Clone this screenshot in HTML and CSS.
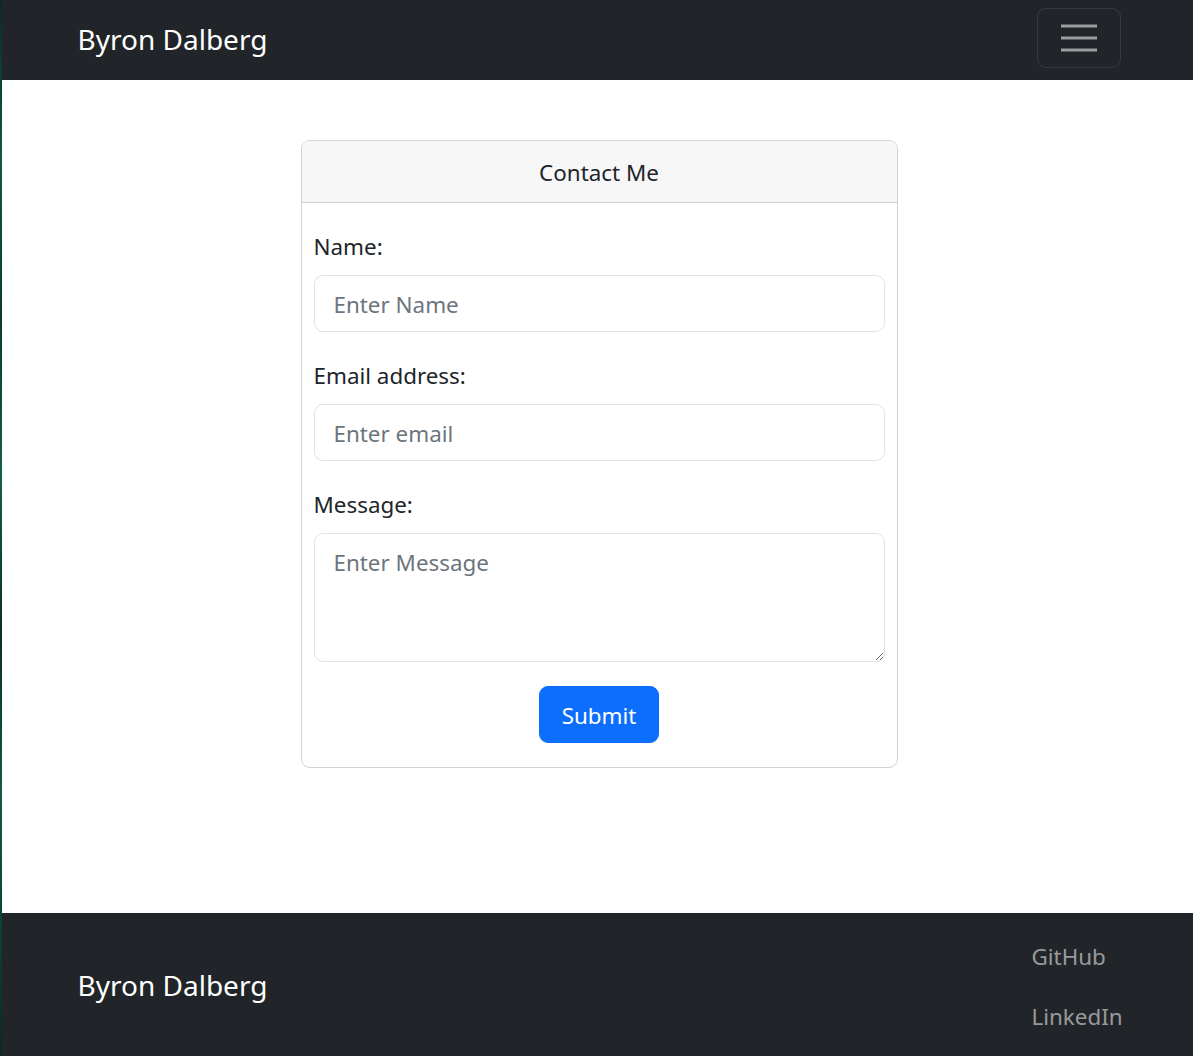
FILE: index.html
```html
<!DOCTYPE html>
<html lang="en">
<head>
<meta charset="utf-8">
<title>Contact - Byron Dalberg</title>
<link rel="stylesheet" href="styles.css">
</head>
<body>
<div class="page">
  <nav class="navbar">
    <div class="container nav-inner">
      <a class="brand" href="#">Byron Dalberg</a>
      <button class="toggler" type="button" aria-label="Toggle navigation">
        <svg width="36" height="30" viewBox="0 0 36 30" aria-hidden="true">
          <path d="M0 6h36M0 18h36M0 30h36" stroke="rgba(255,255,255,0.55)" stroke-width="3" transform="translate(0,-3)"/>
        </svg>
      </button>
    </div>
  </nav>

  <main class="main">
    <div class="card">
      <div class="card-header">Contact Me</div>
      <form class="card-body">
        <div class="group">
          <label class="label" for="name">Name:</label>
          <input class="control" id="name" type="text" placeholder="Enter Name">
        </div>
        <div class="group">
          <label class="label" for="email">Email address:</label>
          <input class="control" id="email" type="email" placeholder="Enter email">
        </div>
        <div class="group">
          <label class="label" for="msg">Message:</label>
          <textarea class="control area" id="msg" rows="3" placeholder="Enter Message"></textarea>
        </div>
        <div class="actions">
          <button class="btn" type="submit">Submit</button>
        </div>
      </form>
    </div>
  </main>

  <footer class="footer">
    <div class="container foot-inner">
      <a class="brand" href="#">Byron Dalberg</a>
      <ul class="foot-links">
        <li><a href="#">GitHub</a></li>
        <li><a href="#">LinkedIn</a></li>
      </ul>
    </div>
  </footer>
</div>
</body>
</html>
```

FILE: styles.css
```css
html {
  background: linear-gradient(180deg, #0b2a24 0%, #0e5a44 15%, #0b3a2e 30%, #10614a 45%, #0a2f27 60%, #0e5c45 75%, #0a2a22 100%);
}
body {
  margin: 0 0 0 2px;
  font-family: "Noto Sans", "Open Sans", sans-serif;
  color: #212529;
  background: #fff;
  font-size: 22.4px;
  line-height: 36px;
}
.page {
  min-height: 1056px;
  display: flex;
  flex-direction: column;
}
.container {
  width: 1080px;
  margin: 0 auto;
  padding: 0 18px;
  box-sizing: border-box;
}
.navbar {
  background: #212529;
  height: 80px;
  box-sizing: border-box;
  padding-top: 8px;
}
.nav-inner {
  display: flex;
  justify-content: space-between;
  align-items: flex-start;
}
.brand {
  color: #fff;
  text-decoration: none;
  font-size: 28px;
  line-height: 45px;
  margin-left: 2px;
}
.navbar .brand {
  margin-top: 9px;
}
.toggler {
  width: 84px;
  height: 60px;
  background: transparent;
  border: 1px solid rgba(255,255,255,0.1);
  border-radius: 9px;
  display: flex;
  align-items: center;
  justify-content: center;
  padding: 0;
  margin-right: -1px;
}
.toggler svg { display: block; }
.main {
  flex: 1;
  padding: 60px 0 144px 3px;
}
.card {
  width: 597px;
  margin: 0 auto;
  border: 1px solid rgba(0,0,0,0.175);
  border-radius: 9px;
  box-sizing: border-box;
  overflow: hidden;
}
.card-header {
  background: #f7f7f7;
  border-bottom: 1px solid rgba(0,0,0,0.175);
  text-align: center;
  height: 62px;
  box-sizing: border-box;
  line-height: 64px;
}
.card-body {
  padding: 24px 12px 24px;
  display: flex;
  flex-direction: column;
}
.group {
  display: flex;
  flex-direction: column;
  margin-bottom: 24px;
}
.label {
  margin-bottom: 10px;
  line-height: 36px;
  padding-top: 2px;
}
.control {
  font: inherit;
  color: #212529;
  height: 57px;
  box-sizing: border-box;
  padding: 10px 19px 8px;
  border: 1px solid #dee2e6;
  border-radius: 9px;
  background: #fff;
  outline: none;
}
.control::placeholder { color: #6c757d; }
.area {
  height: 129px;
  resize: vertical;
  padding-top: 11px;
}
.actions {
  display: flex;
  justify-content: center;
}
.btn {
  font: inherit;
  color: #fff;
  background: #0d6efd;
  border: 1px solid #0d6efd;
  border-radius: 9px;
  height: 57px;
  width: 120px;
  padding: 2px 0 0;
  cursor: pointer;
}
.footer {
  background: #212529;
  height: 143px;
  box-sizing: border-box;
  padding: 13px 0 8px;
}
.foot-inner {
  display: flex;
  justify-content: space-between;
  align-items: center;
  height: 100%;
}
.foot-inner > .brand {
  margin-top: -3px;
}
.foot-links {
  list-style: none;
  margin: 0;
  padding: 0;
  width: 88px;
}
.foot-links a {
  display: block;
  padding: 12px 0;
  line-height: 36px;
  color: rgba(255,255,255,0.55);
  text-decoration: none;
  white-space: nowrap;
}
```
